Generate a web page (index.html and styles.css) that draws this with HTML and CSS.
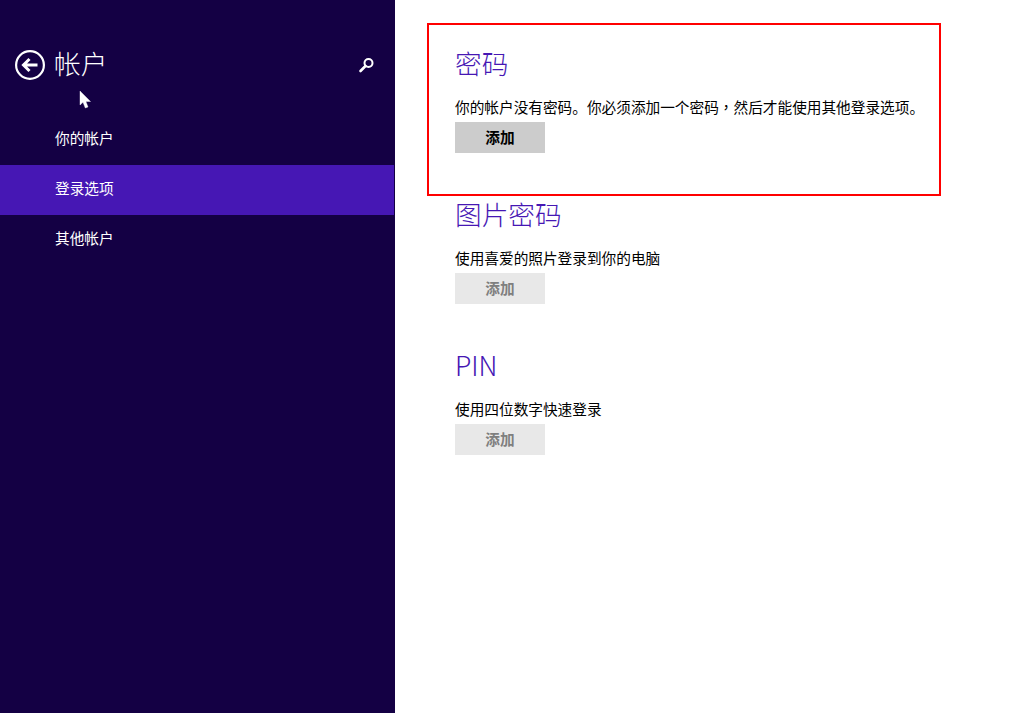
FILE: index.html
```html
<!DOCTYPE html>
<html lang="zh-CN">
<head>
<meta charset="utf-8">
<title>帐户</title>
<link rel="stylesheet" href="styles.css">
</head>
<body>
<div class="app">
  <aside class="sidebar">
    <header class="side-head">
      <svg class="back" width="32" height="32" viewBox="0 0 32 32" fill="none" stroke="#fff">
        <circle cx="16" cy="16" r="13.9" stroke-width="2.2"/>
        <path d="M23.5 16H9.5M15.5 10l-6 6 6 6" stroke-width="3"/>
      </svg>
      <h1 class="side-title">帐户</h1>
      <svg class="search" width="18" height="18" viewBox="0 0 18 18" fill="none" stroke="#fff">
        <circle cx="10.5" cy="7" r="4" stroke-width="2"/>
        <path d="M7.5 10L2.5 15" stroke-width="2.6" stroke-linecap="round"/>
      </svg>
    </header>
    <nav class="nav">
      <div class="nav-item">你的帐户</div>
      <div class="nav-item active">登录选项</div>
      <div class="nav-item">其他帐户</div>
    </nav>
  </aside>
  <main class="content">
    <section class="block">
      <h2 class="heading">密码</h2>
      <p class="desc">你的帐户没有密码。你必须添加一个密码<span class="comma" lang="zh-TW">，</span>然后才能使用其他登录选项。</p>
      <div class="btn">添加</div>
    </section>
    <section class="block">
      <h2 class="heading">图片密码</h2>
      <p class="desc">使用喜爱的照片登录到你的电脑</p>
      <div class="btn off">添加</div>
    </section>
    <section class="block">
      <h2 class="heading">PIN</h2>
      <p class="desc">使用四位数字快速登录</p>
      <div class="btn off">添加</div>
    </section>
  </main>
</div>
<div class="frame"></div>
<svg class="cursor" width="13" height="20" viewBox="0 0 13 20">
  <path d="M1 1V15L4 12.3L6.3 18L9 17L6.9 11.5H11.5Z" fill="#fff" stroke="#fff" stroke-width="0.4"/>
</svg>
</body>
</html>
```
FILE: styles.css
```css
* { box-sizing: border-box; }
html, body { margin: 0; height: 100%; background: #fff; overflow: hidden; }
body { font-family: "Noto Sans CJK SC", "Noto Sans", sans-serif; position: relative; }
.app { display: flex; height: 713px; }
.sidebar { width: 395px; background: #140044; color: #fff; flex: none; border-right: 1px solid #140044; }
.side-head { display: flex; align-items: center; height: 130px; padding: 0 18px 1px 14px; margin-bottom: -15px; }
.back { flex: none; margin-top: 1px; }
.side-title { flex: 1; margin: 0 0 4px 8px; font-size: 26.67px; font-weight: 300; line-height: 40px; }
.search { flex: none; margin-top: 1px; }
.nav { display: flex; flex-direction: column; }
.nav-item { height: 50px; padding-left: 55px; font-size: 14.67px; line-height: 45px; }
.nav-item.active { background: #4617b4; }
.content { flex: 1; padding: 41px 0 0 60px; }
.block { height: 151px; }
.heading { margin: 0; font-size: 26.67px; font-weight: 300; line-height: 44px; color: #4617b4; }
.desc { margin: 11px 0 0; font-size: 14.67px; line-height: 22px; color: #000; white-space: nowrap; }
.comma { font-family: "Noto Sans CJK TC", sans-serif; }
.btn { width: 90px; height: 31px; margin-top: 4px; background: #ccc; color: #000; font-size: 14.67px; font-weight: 700; line-height: 30px; text-align: center; }
.btn.off { background: #e8e8e8; color: #7f7f7f; }
.frame { position: absolute; left: 427px; top: 23px; width: 514px; height: 173px; border: 2px solid #f00; }
.cursor { position: absolute; left: 79px; top: 90px; }
```
